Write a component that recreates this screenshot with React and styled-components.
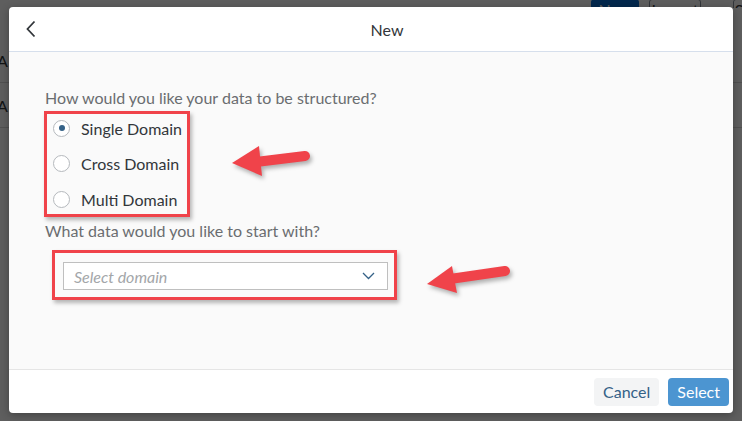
import React, { useState } from "react";
import styled, { createGlobalStyle } from "styled-components";

const GlobalStyle = createGlobalStyle`
  html, body {
    margin: 0;
    padding: 0;
    background: #ffffff;
  }
  body {
    font-family: Lato, "Liberation Sans", Arial, sans-serif;
  }
`;

const Screen = styled.div`
  position: relative;
  width: 742px;
  height: 421px;
  overflow: hidden;
  background: #ffffff;
`;

/* page behind the dialog */
const Toolbar = styled.div`
  display: flex;
  justify-content: flex-end;
  align-items: flex-end;
  height: 8px;
  overflow: hidden;
`;

const ToolButton = styled.div`
  height: 26px;
  box-sizing: border-box;
  width: ${(p) => p.$w}px;
  margin-right: ${(p) => p.$mr}px;
  font-size: 16px;
  line-height: 20px;
  text-align: center;
  border-radius: 3px;
  color: ${(p) => (p.primary ? "#fff" : "#32363a")};
  background: ${(p) => (p.primary ? "#0a6ed1" : "#fff")};
  border: 1px solid ${(p) => (p.primary ? "#0a6ed1" : "#89919a")};
  margin-bottom: -17px;
`;

const ListRow = styled.div`
  height: 44px;
  border-bottom: 1px solid #d9d9d9;
  display: flex;
  align-items: center;
  margin-left: -3px;
  font-size: 16px;
  color: #32363a;
`;

const Dim = styled.div`
  position: absolute;
  inset: 0;
  background: rgba(0, 0, 0, 0.63);
`;

/* dialog */
const Dialog = styled.div`
  position: absolute;
  left: 9px;
  top: 7px;
  width: 724px;
  height: 406px;
  background: #fff;
  border-radius: 4px;
  display: flex;
  flex-direction: column;
  overflow: hidden;
  box-shadow: 0 2px 8px rgba(0, 0, 0, 0.3);
`;

const Header = styled.div`
  height: 44px;
  flex-shrink: 0;
  display: grid;
  grid-template-columns: 60px 1fr 28px;
  align-items: center;
  border-bottom: 1px solid #d6dfec;
`;

const BackButton = styled.button`
  width: 28px;
  height: 28px;
  margin-left: 8px;
  padding: 0;
  border: none;
  background: transparent;
  display: flex;
  align-items: center;
  justify-content: center;
`;

const Title = styled.div`
  text-align: center;
  font-size: 16px;
  color: #32363a;
`;

const Body = styled.div`
  flex: 1;
  background: #fafafa;
  padding: 36px 36px 0;
  display: flex;
  flex-direction: column;
`;

const Label = styled.div`
  font-size: 16px;
  line-height: 19px;
  color: #6a6d70;
`;

const Row = styled.div`
  display: flex;
  align-items: flex-start;
  margin-top: ${(p) => p.$mt}px;
`;

const Highlight = styled.div`
  box-sizing: border-box;
  border: 3px solid #f0434a;
  box-shadow: 2px 3px 4px rgba(0, 0, 0, 0.28);
`;

const RadioBox = styled(Highlight)`
  margin-left: -1px;
  width: 146px;
  height: 106px;
  display: flex;
  flex-direction: column;
  gap: 7.5px;
`;

const RadioRow = styled.label`
  display: flex;
  align-items: center;
  gap: 11px;
  height: 28px;
  flex-shrink: 0;
  padding-left: 6px;
  font-size: 16px;
  color: #32363a;
  cursor: pointer;
`;

const RadioCircle = styled.span`
  width: 17px;
  height: 17px;
  box-sizing: border-box;
  border-radius: 50%;
  border: 1.5px solid #b5b9bd;
  background: #fff;
  display: flex;
  align-items: center;
  justify-content: center;
  &::after {
    content: "";
    width: 6px;
    height: 6px;
    border-radius: 50%;
    background: ${(p) => (p.checked ? "#346187" : "transparent")};
  }
`;

const SecondLabel = styled(Label)`
  margin-top: 4px;
`;

const SelectBox = styled(Highlight)`
  margin-left: 7px;
  width: 345px;
  height: 50px;
  padding: 9px 6px 7px 8px;
`;

const SelectField = styled.div`
  height: 28px;
  box-sizing: border-box;
  border: 1px solid #bfbfbf;
  background: #fff;
  display: flex;
  align-items: center;
  justify-content: space-between;
  padding: 0 12px 0 10px;
`;

const Placeholder = styled.span`
  font-size: 16px;
  font-style: italic;
  color: #a3a6a9;
`;

const ArrowSvg = styled.svg`
  flex-shrink: 0;
  margin-left: ${(p) => p.$ml}px;
  margin-top: ${(p) => p.$mt}px;
  filter: drop-shadow(2px 3px 2px rgba(0, 0, 0, 0.3));
  overflow: visible;
`;

const Footer = styled.div`
  height: 43px;
  flex-shrink: 0;
  border-top: 1px solid #e5e5e5;
  display: flex;
  align-items: center;
  justify-content: flex-end;
  gap: 9px;
  padding-right: 4px;
`;

const Button = styled.button`
  height: 28px;
  padding: 0 9px;
  border-radius: 4px;
  border: none;
  font-family: Lato, "Liberation Sans", Arial, sans-serif;
  font-size: 16px;
  color: ${(p) => (p.primary ? "#ffffff" : "#346187")};
  background: ${(p) => (p.primary ? "#4c95d1" : "#f3f4f5")};
  cursor: pointer;
`;

const Arrow = ({ tip, top, bottom, from, to, ml, mt, w, h }) => (
  <ArrowSvg width={w} height={h} viewBox={`0 0 ${w} ${h}`} $ml={ml} $mt={mt}>
    <line
      x1={from[0]}
      y1={from[1]}
      x2={to[0]}
      y2={to[1]}
      stroke="#f0434a"
      strokeWidth="10"
      strokeLinecap="round"
    />
    <polygon
      points={`${tip[0]},${tip[1]} ${top[0]},${top[1]} ${bottom[0]},${bottom[1]}`}
      fill="#f0434a"
    />
  </ArrowSvg>
);

const options = ["Single Domain", "Cross Domain", "Multi Domain"];

export default function App() {
  const [choice, setChoice] = useState(0);

  return (
    <Screen>
      <GlobalStyle />
      <Toolbar>
        <ToolButton primary $w={48} $mr={10}>New</ToolButton>
        <ToolButton $w={52} $mr={32}>Import</ToolButton>
        <ToolButton $w={12} $mr={-3}>S</ToolButton>
      </Toolbar>
      <ListRow style={{ marginTop: 30 }}>A</ListRow>
      <ListRow>A</ListRow>
      <Dim />
      <Dialog>
        <Header>
          <BackButton aria-label="Back">
            <svg width="12" height="18" viewBox="0 0 12 18">
              <path d="M9.5 1.5 L2.5 9 L9.5 16.5" fill="none" stroke="#32363a" strokeWidth="1.8" />
            </svg>
          </BackButton>
          <Title>New</Title>
          <div />
        </Header>
        <Body>
          <Label>How would you like your data to be structured?</Label>
          <Row $mt={4}>
            <RadioBox>
              {options.map((o, i) => (
                <RadioRow key={o} onClick={() => setChoice(i)}>
                  <RadioCircle checked={choice === i} />
                  {o}
                </RadioRow>
              ))}
            </RadioBox>
            <Arrow
              w={86}
              h={40}
              ml={38}
              mt={31}
              tip={[4, 21]}
              top={[31, 4]}
              bottom={[34, 34]}
              from={[28, 20]}
              to={[77, 14]}
            />
          </Row>
          <SecondLabel>What data would you like to start with?</SecondLabel>
          <Row $mt={10}>
            <SelectBox>
              <SelectField>
                <Placeholder>Select domain</Placeholder>
                <svg width="13" height="8" viewBox="0 0 13 8">
                  <path d="M1 1 L6.5 6.5 L12 1" fill="none" stroke="#346187" strokeWidth="1.3" />
                </svg>
              </SelectField>
            </SelectBox>
            <Arrow
              w={92}
              h={40}
              ml={25}
              mt={8}
              tip={[5, 26]}
              top={[30, 8]}
              bottom={[35, 35]}
              from={[28, 21]}
              to={[83, 13]}
            />
          </Row>
        </Body>
        <Footer>
          <Button>Cancel</Button>
          <Button primary>Select</Button>
        </Footer>
      </Dialog>
    </Screen>
  );
}
